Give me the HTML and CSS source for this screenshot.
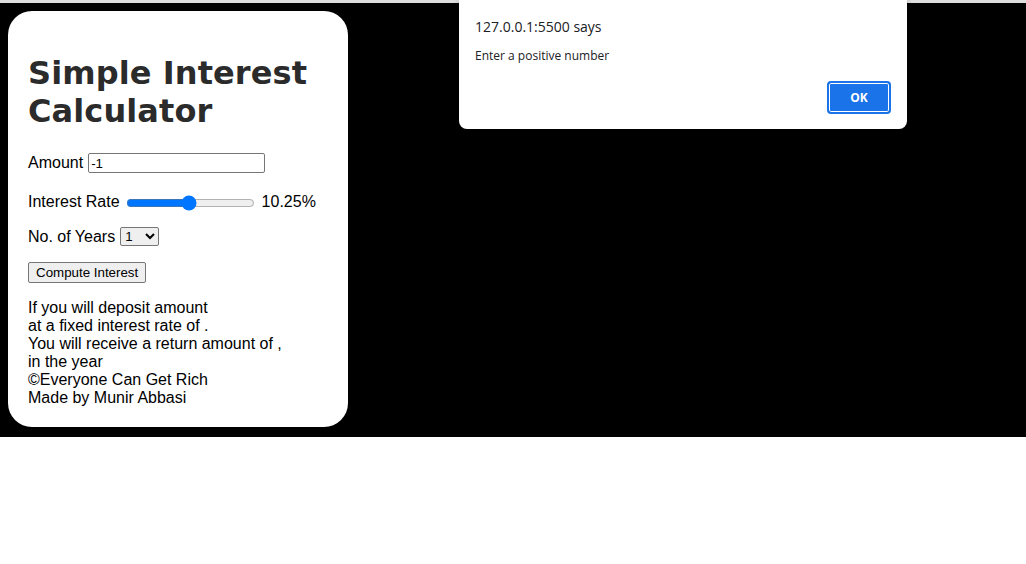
FILE: index.html
```html
<!DOCTYPE html>
<html>
<head>
<meta charset="utf-8">
<link rel="stylesheet" href="styles.css">
</head>
<body>
<div class="topline"></div>
<main class="stage">
  <section class="card">
    <h1 class="title">Simple Interest Calculator</h1>
    <div class="row row-amount">Amount <input class="amount" type="text" value="-1"></div>
    <div class="row row-rate">Interest Rate <input class="rate" type="range" min="1" max="20" step="0.25" value="10.25"> <span class="rate-val">10.25%</span></div>
    <div class="row row-years">No. of Years <select class="years"><option>1</option><option>2</option></select></div>
    <div class="row row-btn"><button class="compute">Compute Interest</button></div>
    <div class="result">
      If you will deposit amount<br>
      at a fixed interest rate of .<br>
      You will receive a return amount of ,<br>
      in the year<br>
      ©Everyone Can Get Rich<br>
      Made by Munir Abbasi
    </div>
  </section>
</main>
<div class="dialog">
  <div class="dlg-title">127.0.0.1:5500 says</div>
  <div class="dlg-msg">Enter a positive number</div>
  <div class="dlg-actions"><button class="dlg-ok">OK</button></div>
</div>
</body>
</html>
```
FILE: styles.css
```css
html, body {
  margin: 0;
  padding: 0;
  background: #ffffff;
}
body {
  font-family: "Liberation Sans", Arial, sans-serif;
  font-size: 16px;
  width: 1026px;
  height: 564px;
  overflow: hidden;
  position: relative;
}
.topline {
  height: 3px;
  background: #dedede;
}
.stage {
  background: #000000;
  padding: 8px;
  height: 418px;
}
.card {
  background: #ffffff;
  width: 300px;
  height: 376px;
  padding: 20px;
  border-radius: 24px;
}
.title {
  font-family: "DejaVu Sans", Verdana, sans-serif;
  font-weight: bold;
  font-size: 32px;
  color: #2b2b2b;
  margin: 23px 0 23px 0;
  line-height: 38px;
  letter-spacing: 0.1px;
}
.row {
  display: flex;
  align-items: center;
  gap: 5px;
  color: #000;
}
.row-amount { margin-top: 0; }
.row-rate { margin-top: 20px; }
.row-years { margin-top: 16px; }
.row-btn { margin-top: 16px; }
.amount {
  width: 171px;
  height: 16px;
  padding: 1px 2px;
  border: 1px solid #767676;
  border-radius: 2px;
  font-family: "Liberation Sans", Arial, sans-serif;
  font-size: 13.33px;
  margin: 0;
}
.rate {
  width: 129px;
  margin: 2px 2px 0 1px;
  accent-color: #0075ff;
}
.years {
  font-family: "Liberation Sans", Arial, sans-serif;
  font-size: 13.33px;
  width: 39px;
  height: 19px;
  border: 1px solid #767676;
  border-radius: 2px;
  margin: 0;
}
.compute {
  font-family: "Liberation Sans", Arial, sans-serif;
  font-size: 13.33px;
  padding: 1px 7px;
  height: 21px;
  border: 1px solid #767676;
  border-radius: 2px;
  background: #efefef;
  margin: 0;
}
.result {
  margin-top: 16px;
  line-height: 18px;
  color: #000;
}
.dialog {
  position: absolute;
  left: 459px;
  top: 0;
  width: 448px;
  height: 129px;
  background: #ffffff;
  border-radius: 0 0 8px 8px;
  box-shadow: 0 2px 6px rgba(0,0,0,0.35);
  box-sizing: border-box;
  padding: 17px 16px 0 16px;
  font-family: "Open Sans", "Noto Sans", sans-serif;
  color: #202124;
}
.dlg-title {
  font-size: 14px;
  line-height: 20px;
}
.dlg-msg {
  font-size: 12px;
  line-height: 16px;
  margin-top: 11px;
}
.dlg-actions {
  display: flex;
  justify-content: flex-end;
  margin-top: 17px;
}
.dlg-ok {
  width: 64px;
  height: 33px;
  background: #1a73e8;
  color: #ffffff;
  border: 2px solid #1a73e8;
  box-shadow: inset 0 0 0 1px #ffffff;
  border-radius: 4px;
  font-family: "Open Sans", "Noto Sans", sans-serif;
  font-weight: bold;
  font-size: 12px;
  margin: 0;
}
```
